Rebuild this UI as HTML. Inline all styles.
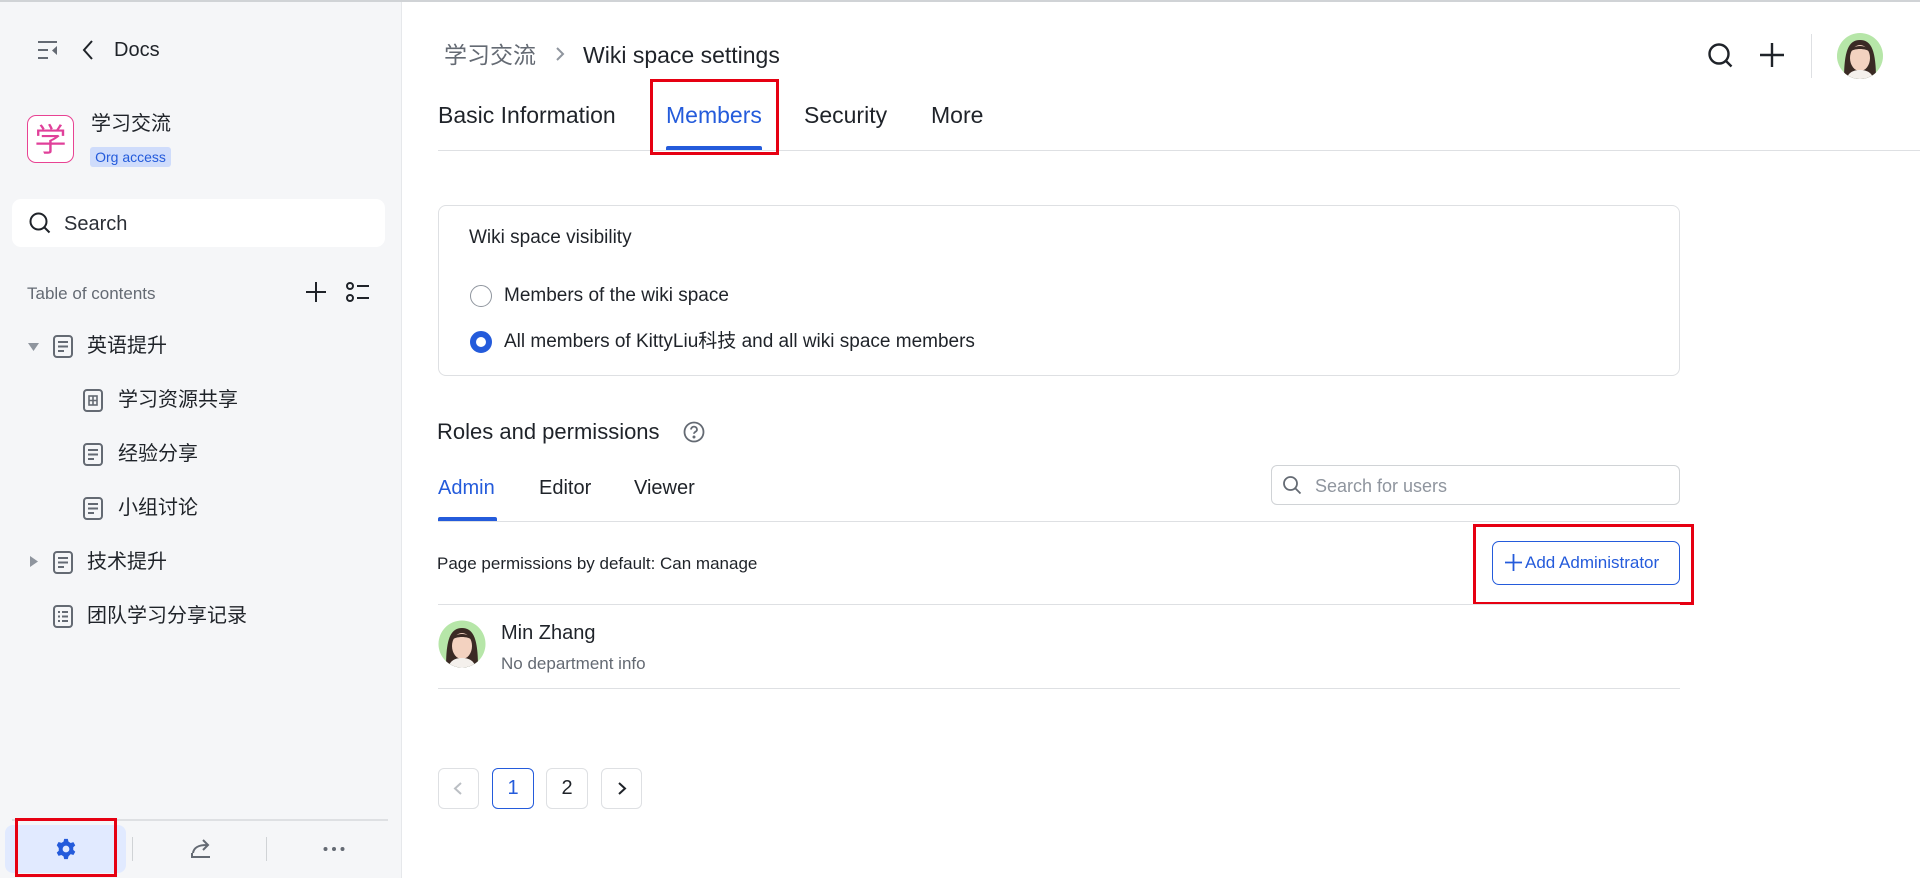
<!DOCTYPE html>
<html><head><meta charset="utf-8"><style>
*{margin:0;padding:0;box-sizing:border-box}
body{width:1920px;height:878px;overflow:hidden;background:#fff;font-family:"Liberation Sans","Noto Sans CJK SC",sans-serif;color:#1f2329;position:relative}
.a{position:absolute;white-space:nowrap}
.side{position:absolute;left:0;top:0;width:402px;height:878px;background:#f5f6f8;border-right:1px solid #e6e8eb}
.t{line-height:1}
svg{position:absolute;overflow:visible}
</style></head><body>
<div class="a" style="left:0;top:0;width:1920px;height:2px;background:#d0d3d6;z-index:5"></div>
<div class="side"></div>
<!-- sidebar top -->
<svg style="left:37px;top:40px" width="22" height="20" viewBox="0 0 22 20" fill="none" stroke="#646a73" stroke-width="2"><path d="M1 2h19M1 10h10M1 18h10"/><path d="M20 6v9l-5-4.5z" fill="#646a73" stroke="none"/></svg>
<svg style="left:82px;top:39px" width="12" height="22" viewBox="0 0 12 22" fill="none" stroke="#1f2329" stroke-width="2"><path d="M10 2L2 11l8 9"/></svg>
<div class="a t" style="left:114px;top:40px;font-size:20px">Docs</div>
<div class="a" style="left:27px;top:115px;width:47px;height:48px;border:1.5px solid #e84393;border-radius:9px;background:#fff;color:#e0409a;font-size:32px;line-height:44px;text-align:center;font-family:'Noto Sans CJK SC',sans-serif">学</div>
<div class="a t" style="left:91px;top:114px;font-size:20px">学习交流</div>
<div class="a" style="left:90px;top:147px;width:81px;height:20px;background:#cfdcfb;border-radius:3px;color:#245bdb;font-size:14px;line-height:20px;text-align:center">Org access</div>
<div class="a" style="left:12px;top:199px;width:373px;height:48px;background:#fff;border-radius:9px"></div>
<svg style="left:29px;top:212px" width="22" height="22" viewBox="0 0 22 22" fill="none" stroke="#1f2329" stroke-width="2"><circle cx="9.5" cy="9.5" r="8"/><path d="M15.5 15.5l5 5"/></svg>
<div class="a t" style="left:64px;top:214px;font-size:20px;color:#2b2f36">Search</div>
<div class="a t" style="left:27px;top:285px;font-size:17px;color:#646a73">Table of contents</div>
<svg style="left:306px;top:282px" width="20" height="20" fill="none" stroke="#1f2329" stroke-width="2"><path d="M10 0v20M0 10h20"/></svg>
<svg style="left:346px;top:282px" width="24" height="20" fill="none" stroke="#1f2329" stroke-width="2"><circle cx="4" cy="4" r="3"/><circle cx="4" cy="16" r="3"/><path d="M11 4h12M11 16h12"/></svg>
<!-- tree -->
<svg style="left:28px;top:343px" width="11" height="8"><path d="M0 0h11L5.5 8z" fill="#8f959e"/></svg>
<svg style="left:53px;top:335px" width="20" height="23" fill="none" stroke="#646a73" stroke-width="2"><rect x="1" y="1" width="18" height="21" rx="3"/><path d="M5 7h10M5 11.5h10M5 16h6"/></svg>
<div class="a t" style="left:87px;top:336px;font-size:20px">英语提升</div>
<svg style="left:83px;top:389px" width="20" height="23" fill="none" stroke="#646a73" stroke-width="2"><rect x="1" y="1" width="18" height="21" rx="3"/><rect x="6" y="7" width="8" height="9" stroke-width="1.6"/><path d="M10 7v9M6 11.5h8" stroke-width="1.6"/></svg>
<div class="a t" style="left:118px;top:390px;font-size:20px">学习资源共享</div>
<svg style="left:83px;top:443px" width="20" height="23" fill="none" stroke="#646a73" stroke-width="2"><rect x="1" y="1" width="18" height="21" rx="3"/><path d="M5 7h10M5 11.5h10M5 16h6"/></svg>
<div class="a t" style="left:118px;top:444px;font-size:20px">经验分享</div>
<svg style="left:83px;top:497px" width="20" height="23" fill="none" stroke="#646a73" stroke-width="2"><rect x="1" y="1" width="18" height="21" rx="3"/><path d="M5 7h10M5 11.5h10M5 16h6"/></svg>
<div class="a t" style="left:118px;top:498px;font-size:20px">小组讨论</div>
<svg style="left:30px;top:556px" width="8" height="11"><path d="M0 0v11l8-5.5z" fill="#8f959e"/></svg>
<svg style="left:53px;top:551px" width="20" height="23" fill="none" stroke="#646a73" stroke-width="2"><rect x="1" y="1" width="18" height="21" rx="3"/><path d="M5 7h10M5 11.5h10M5 16h6"/></svg>
<div class="a t" style="left:87px;top:552px;font-size:20px">技术提升</div>
<svg style="left:53px;top:605px" width="20" height="23" fill="none" stroke="#646a73" stroke-width="2"><rect x="1" y="1" width="18" height="21" rx="3"/><path d="M5 7h2M9 7h6M5 11.5h2M9 11.5h6M5 16h2M9 16h6"/></svg>
<div class="a t" style="left:87px;top:606px;font-size:20px">团队学习分享记录</div>
<!-- bottom -->
<div class="a" style="left:12px;top:819px;width:376px;height:2px;background:#dee0e3"></div>
<div class="a" style="left:5px;top:825px;width:121px;height:48px;background:#e1eaff;border-radius:8px"></div>
<div class="a" style="left:15px;top:818px;width:102px;height:59px;border:3px solid #e60012"></div>
<svg style="left:55px;top:838px" width="22" height="22" viewBox="0 0 24 24"><path fill="#245bdb" d="M10 1h4l.7 3 2.4 1.4 3-.9 2 3.5-2.2 2.1v2.8l2.2 2.1-2 3.5-3-.9L14.7 20l-.7 3h-4l-.7-3-2.4-1.4-3 .9-2-3.5 2.2-2.1v-2.8L1.9 7.9l2-3.5 3 .9L9.3 4zM12 8.3a3.7 3.7 0 100 7.4 3.7 3.7 0 000-7.4z"/></svg>
<div class="a" style="left:132px;top:837px;width:1px;height:24px;background:#d0d3d6"></div>
<div class="a" style="left:266px;top:837px;width:1px;height:24px;background:#d0d3d6"></div>
<svg style="left:191px;top:838px" width="20" height="20" fill="none" stroke="#646a73" stroke-width="2"><path d="M1 15v4h18"/><path d="M2 15c1-6 6-8 14-8M12 2l5 5-5 5"/></svg>
<svg style="left:323px;top:846px" width="22" height="6"><circle cx="2.5" cy="3" r="2" fill="#646a73"/><circle cx="11" cy="3" r="2" fill="#646a73"/><circle cx="19.5" cy="3" r="2" fill="#646a73"/></svg>
<!-- main header -->
<div class="a t" style="left:444px;top:44px;font-size:23px;color:#646a73">学习交流</div>
<svg style="left:556px;top:47px" width="9" height="14" fill="none" stroke="#8f959e" stroke-width="2"><path d="M1 1l6 6-6 6"/></svg>
<div class="a t" style="left:583px;top:44px;font-size:23px">Wiki space settings</div>
<svg style="left:1708px;top:43px" width="25" height="25" fill="none" stroke="#1f2329" stroke-width="2.4"><circle cx="11" cy="11" r="9.5"/><path d="M18 18l5.5 5.5"/></svg>
<svg style="left:1760px;top:43px" width="24" height="24" fill="none" stroke="#1f2329" stroke-width="2.4"><path d="M12 0v24M0 12h24"/></svg>
<div class="a" style="left:1811px;top:34px;width:1px;height:44px;background:#dee0e3"></div>
<svg style="left:1836px;top:32px" width="48" height="48" viewBox="0 0 48 48"><defs><clipPath id="c1"><circle cx="24" cy="24" r="23"/></clipPath></defs><g clip-path="url(#c1)"><rect width="48" height="48" fill="#b6e6a8"/><path d="M8 48C8 20 12 8 24 8s16 12 16 40z" fill="#3a2a24"/><ellipse cx="24" cy="26" rx="10" ry="13" fill="#f3d2c0"/><path d="M10 48c2-8 8-10 14-10s12 2 14 10z" fill="#f4f0ec"/><path d="M14 20c2-8 18-8 20 0-4-4-16-4-20 0z" fill="#3a2a24"/></g></svg>
<!-- tabs -->
<div class="a t" style="left:438px;top:104px;font-size:23px">Basic Information</div>
<div class="a t" style="left:666px;top:104px;font-size:23px;color:#245bdb">Members</div>
<div class="a t" style="left:804px;top:104px;font-size:23px">Security</div>
<div class="a t" style="left:931px;top:104px;font-size:23px">More</div>
<div class="a" style="left:438px;top:150px;width:1482px;height:1px;background:#dee0e3"></div>
<div class="a" style="left:666px;top:146px;width:96px;height:4px;background:#245bdb;border-radius:2px 2px 0 0"></div>
<div class="a" style="left:650px;top:79px;width:129px;height:76px;border:3px solid #e60012"></div>
<!-- visibility card -->
<div class="a" style="left:438px;top:205px;width:1242px;height:171px;border:1px solid #dee0e3;border-radius:8px"></div>
<div class="a t" style="left:469px;top:228px;font-size:19px">Wiki space visibility</div>
<div class="a" style="left:470px;top:285px;width:22px;height:22px;border:1.5px solid #8f959e;border-radius:50%"></div>
<div class="a t" style="left:504px;top:286px;font-size:19px">Members of the wiki space</div>
<div class="a" style="left:470px;top:331px;width:22px;height:22px;border:6px solid #245bdb;border-radius:50%;background:#fff"></div>
<div class="a t" style="left:504px;top:332px;font-size:19px">All members of KittyLiu科技 and all wiki space members</div>
<!-- roles -->
<div class="a t" style="left:437px;top:421px;font-size:22px">Roles and permissions</div>
<svg style="left:683px;top:421px" width="22" height="22" fill="none" stroke="#646a73" stroke-width="1.8"><circle cx="11" cy="11" r="9.5"/><path d="M8 8.5a3 3 0 116 .2c0 2-3 2-3 4"/><circle cx="11" cy="16" r=".6" fill="#646a73"/></svg>
<div class="a t" style="left:438px;top:478px;font-size:20px;color:#245bdb">Admin</div>
<div class="a t" style="left:539px;top:478px;font-size:20px">Editor</div>
<div class="a t" style="left:634px;top:478px;font-size:20px">Viewer</div>
<div class="a" style="left:1271px;top:465px;width:409px;height:40px;border:1px solid #d0d3d6;border-radius:6px"></div>
<svg style="left:1283px;top:476px" width="18" height="18" fill="none" stroke="#646a73" stroke-width="1.8"><circle cx="7.5" cy="7.5" r="6.5"/><path d="M12.5 12.5l5 5"/></svg>
<div class="a t" style="left:1315px;top:477px;font-size:18px;color:#8f959e">Search for users</div>
<div class="a" style="left:438px;top:521px;width:1242px;height:1px;background:#dee0e3"></div>
<div class="a" style="left:438px;top:517px;width:59px;height:4px;background:#245bdb;border-radius:2px 2px 0 0"></div>
<div class="a t" style="left:437px;top:555px;font-size:17px">Page permissions by default: Can manage</div>
<div class="a" style="left:1492px;top:541px;width:188px;height:44px;border:1px solid #245bdb;border-radius:7px;color:#245bdb;font-size:17px;line-height:42px;padding-left:32px">Add Administrator</div>
<svg style="left:1505px;top:554px" width="17" height="17" fill="none" stroke="#245bdb" stroke-width="1.8"><path d="M8.5 0v17M0 8.5h17"/></svg>
<div class="a" style="left:1473px;top:524px;width:221px;height:81px;border:3px solid #e60012"></div>
<div class="a" style="left:438px;top:604px;width:1242px;height:1px;background:#dee0e3"></div>
<svg style="left:438px;top:620px" width="48" height="48" viewBox="0 0 48 48"><defs><clipPath id="c2"><circle cx="24" cy="24" r="23.5"/></clipPath></defs><g clip-path="url(#c2)"><rect width="48" height="48" fill="#b6e6a8"/><path d="M8 48C8 20 12 8 24 8s16 12 16 40z" fill="#3a2a24"/><ellipse cx="24" cy="26" rx="10" ry="13" fill="#f3d2c0"/><path d="M10 48c2-8 8-10 14-10s12 2 14 10z" fill="#f4f0ec"/><path d="M14 20c2-8 18-8 20 0-4-4-16-4-20 0z" fill="#3a2a24"/></g></svg>
<div class="a t" style="left:501px;top:623px;font-size:20px">Min Zhang</div>
<div class="a t" style="left:501px;top:655px;font-size:17px;color:#646a73">No department info</div>
<div class="a" style="left:438px;top:688px;width:1242px;height:1px;background:#dee0e3"></div>
<!-- pagination -->
<div class="a" style="left:438px;top:768px;width:41px;height:41px;border:1px solid #dee0e3;border-radius:6px"></div>
<svg style="left:454px;top:782px" width="8" height="13" fill="none" stroke="#bbbfc4" stroke-width="2"><path d="M7 1L1 6.5 7 12"/></svg>
<div class="a" style="left:492px;top:768px;width:42px;height:41px;border:1px solid #245bdb;border-radius:6px;color:#245bdb;font-size:20px;line-height:39px;text-align:center">1</div>
<div class="a" style="left:546px;top:768px;width:42px;height:41px;border:1px solid #dee0e3;border-radius:6px;font-size:20px;line-height:39px;text-align:center">2</div>
<div class="a" style="left:601px;top:768px;width:41px;height:41px;border:1px solid #dee0e3;border-radius:6px"></div>
<svg style="left:618px;top:782px" width="8" height="13" fill="none" stroke="#1f2329" stroke-width="2"><path d="M1 1l6 5.5L1 12"/></svg>
</body></html>
